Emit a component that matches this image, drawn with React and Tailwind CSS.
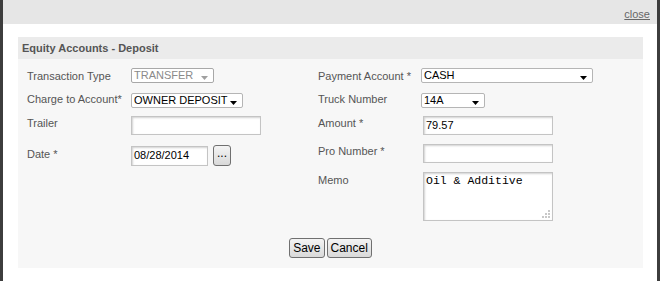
import React from 'react';

const font = "font-['Liberation_Sans',Arial,sans-serif]";

const Arrow = ({ disabled }) => (
  <svg width="7" height="4" viewBox="0 0 7 4" className="absolute right-[5px] bottom-[2px]">
    <path d="M0 0h7L3.5 4z" fill={disabled ? '#a0a0a0' : '#000'} />
  </svg>
);

const Select = ({ value, width, disabled }) => (
  <div
    className={`relative h-[15px] rounded-[2px] border bg-white pl-[2px] text-[11px] leading-[13px] ${
      disabled ? 'border-[#a8a8a8] text-[#8a8a8a]' : 'border-[#b5b5b5] text-black'
    }`}
    style={{ width }}
  >
    {value}
    <Arrow disabled={disabled} />
  </div>
);

const Input = ({ value = '', width = 130, height = 19 }) => (
  <div
    className="border border-[#c4c4c4] bg-white pl-[2px] text-[11px] leading-[17px] text-black shadow-[inset_1px_1px_2px_rgba(0,0,0,0.18)]"
    style={{ width, height }}
  >
    {value}
  </div>
);

const Btn = ({ children, className = '' }) => (
  <button
    type="button"
    className={`h-[20px] rounded-[3px] border border-[#707070] bg-gradient-to-b from-[#f4f4f4] to-[#d9d9d9] px-[3px] text-[12px] leading-[16px] text-black ${className}`}
  >
    {children}
  </button>
);

const Label = ({ children, className = '' }) => (
  <div className={`text-[11px] leading-[13px] text-[#555] ${className}`}>{children}</div>
);

export default function App() {
  return (
    <div className={`flex h-[281px] w-[660px] bg-[#3d3d3d] ${font}`}>
      <div className="ml-[3px] flex w-[654px] flex-col bg-white">
        <div className="flex h-[24px] items-start justify-end bg-[#e6e6e6] pr-[7px] pt-[8px]">
          <a className="text-[11px] leading-[13px] text-[#666] underline">close</a>
        </div>

        <div className="ml-[15px] mr-[14px] mt-[13px] flex flex-col bg-[#f7f7f7]">
          <div className="flex h-[22px] items-center bg-[#ebebeb] pl-[4px] text-[11px] font-bold text-[#555]">
            Equity Accounts - Deposit
          </div>

          <div className="flex flex-col pb-[10px] pl-[9px] pt-[9px]">
            <div className="flex">
              {/* left column */}
              <div className="flex w-[291px] flex-col">
                <div className="flex h-[24px]">
                  <Label className="w-[104px] pt-[2px]">Transaction Type</Label>
                  <Select value="TRANSFER" width={83} disabled />
                </div>
                <div className="flex h-[24px]">
                  <Label className="w-[104px] pt-[1px]">Charge to Account*</Label>
                  <div className="pt-[1px]">
                    <Select value="OWNER DEPOSIT" width={112} />
                  </div>
                </div>
                <div className="flex h-[29px]">
                  <Label className="w-[104px] pt-[1px]">Trailer</Label>
                  <Input />
                </div>
                <div className="flex">
                  <Label className="w-[104px] pt-[3px]">Date *</Label>
                  <div className="flex gap-[5px]">
                    <div className="pt-[1px]">
                      <Input value="08/28/2014" width={77} height={20} />
                    </div>
                    <Btn className="flex h-[21px] w-[18px] items-end justify-center px-0 pb-[4px] text-[10px] leading-[6px]">
                      ...
                    </Btn>
                  </div>
                </div>
              </div>

              {/* right column */}
              <div className="flex flex-col">
                <div className="flex h-[24px]">
                  <Label className="w-[103px] pt-[2px]">Payment Account *</Label>
                  <Select value="CASH" width={172} />
                </div>
                <div className="flex h-[24px]">
                  <Label className="w-[103px] pt-[1px]">Truck Number</Label>
                  <div className="pt-[1px]">
                    <Select value="14A" width={64} />
                  </div>
                </div>
                <div className="flex h-[28px]">
                  <Label className="w-[105px] pt-[1px]">Amount *</Label>
                  <Input value="79.57" />
                </div>
                <div className="flex h-[28px]">
                  <Label className="w-[105px] pt-[1px]">Pro Number *</Label>
                  <Input />
                </div>
                <div className="flex">
                  <Label className="w-[105px] pt-[2px]">Memo</Label>
                  <div className="relative h-[49px] w-[130px] border border-[#c4c4c4] bg-white pl-[2px] pt-[1px] font-['Liberation_Mono','Courier_New',monospace] text-[11.5px] leading-[14px] text-black shadow-[inset_1px_1px_2px_rgba(0,0,0,0.18)]">
                    Oil &amp; Additive
                    <svg width="8" height="8" viewBox="0 0 8 8" className="absolute bottom-[2px] right-[2px]">
                      <rect x="6" y="0" width="2" height="2" fill="#c8c8c8" />
                      <rect x="3" y="3" width="2" height="2" fill="#c8c8c8" />
                      <rect x="6" y="3" width="2" height="2" fill="#c8c8c8" />
                      <rect x="0" y="6" width="2" height="2" fill="#c8c8c8" />
                      <rect x="3" y="6" width="2" height="2" fill="#c8c8c8" />
                      <rect x="6" y="6" width="2" height="2" fill="#c8c8c8" />
                    </svg>
                  </div>
                </div>
              </div>
            </div>

            <div className="mt-[17px] flex justify-center gap-[2px] pr-[9px]">
              <Btn>Save</Btn>
              <Btn>Cancel</Btn>
            </div>
          </div>
        </div>
      </div>
    </div>
  );
}
